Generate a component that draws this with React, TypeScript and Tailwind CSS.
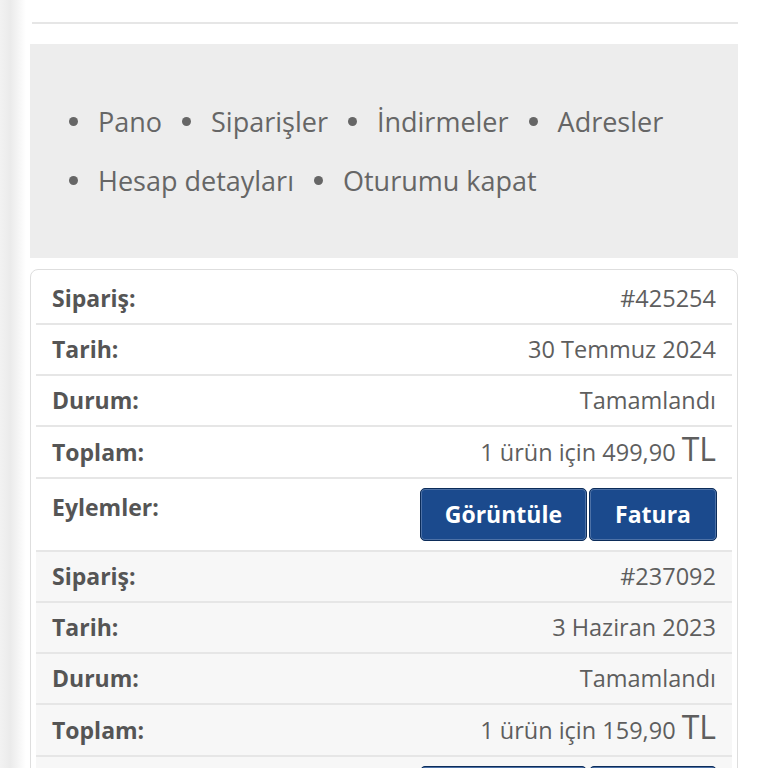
import React from "react";

type Order = {
    id: string;
    date: string;
    status: string;
    total: string;
};

const orders: Order[] = [
    { id: "#425254", date: "30 Temmuz 2024", status: "Tamamlandı", total: "499,90" },
    { id: "#237092", date: "3 Haziran 2023", status: "Tamamlandı", total: "159,90" },
];

const menuItems = ["Pano", "Siparişler", "İndirmeler", "Adresler", "Hesap detayları", "Oturumu kapat"];

const Row = ({ label, children, alt }: { label: string; children: React.ReactNode; alt: boolean }) => (
    <div
        className={
            "flex h-[51px] items-center justify-between border-b-2 border-[#e6e6e6] px-4 " +
            (alt ? "bg-[#f7f7f7]" : "bg-white")
        }
    >
        <span className="text-[23px] font-bold text-[#555]">{label}</span>
        <span className="text-[#5e5e5e]">{children}</span>
    </div>
);

const OrderBlock = ({ order, alt }: { order: Order; alt: boolean }) => (
    <div>
        <Row label="Sipariş:" alt={alt}>{order.id}</Row>
        <Row label="Tarih:" alt={alt}>{order.date}</Row>
        <Row label="Durum:" alt={alt}>{order.status}</Row>
        <div
            className={
                "flex h-[52px] items-center justify-between border-b-2 border-[#e6e6e6] px-4 " +
                (alt ? "bg-[#f7f7f7]" : "bg-white")
            }
        >
            <span className="text-[23px] font-bold text-[#555]">Toplam:</span>
            <span className="text-[#5e5e5e]">
                1 ürün için {order.total} <span className="text-[32px] leading-none">TL</span>
            </span>
        </div>
        <div
            className={
                "flex items-start justify-between border-b-2 border-[#e6e6e6] py-[9px] pl-4 pr-[15px] " +
                (alt ? "bg-[#f7f7f7]" : "bg-white")
            }
        >
            <span className="pt-[3px] text-[23px] font-bold leading-[32px] text-[#555]">Eylemler:</span>
            <div className="flex gap-[2px]">
                <button className="h-[53px] rounded-[5px] border border-[#0c2c59] bg-[#1b4a8d] px-[24px] text-[23px] font-bold text-white shadow-[inset_0_0_0_1px_rgba(255,255,255,0.22)]">
                    Görüntüle
                </button>
                <button className="h-[53px] rounded-[5px] border border-[#0c2c59] bg-[#1b4a8d] px-[25px] text-[23px] font-bold text-white shadow-[inset_0_0_0_1px_rgba(255,255,255,0.22)]">
                    Fatura
                </button>
            </div>
        </div>
    </div>
);

export default function App() {
    return (
        <div className="flex min-h-screen bg-white font-['Open_Sans',sans-serif] text-[23.5px]">
            {/* page shadow strip */}
            <div className="w-[26px] shrink-0 bg-linear-to-r from-[#f2f2f2] via-[#ebebeb] via-40% to-white" />

            <div className="ml-[4px] w-[708px] shrink-0">
                <div className="ml-[2px] h-[24px] border-b-2 border-[#e6e6e6]" />

                {/* account navigation */}
                <nav className="mt-[20px] h-[214px] bg-[#ededed] py-[48px] pl-[39px] pr-6">
                    <ul className="flex flex-wrap gap-x-5 text-[27px] leading-[59px] text-[#666]">
                        {menuItems.map((item) => (
                            <li key={item} className="flex items-center gap-5">
                                <span className="h-[9px] w-[9px] rounded-full bg-[#666]" />
                                {item}
                            </li>
                        ))}
                    </ul>
                </nav>

                {/* orders */}
                <div className="mt-[11px] rounded-[8px] border border-[#dedede] px-[5px] pt-[4px]">
                    {orders.map((order, i) => (
                        <OrderBlock key={order.id} order={order} alt={i % 2 === 1} />
                    ))}
                </div>
            </div>
        </div>
    );
}
